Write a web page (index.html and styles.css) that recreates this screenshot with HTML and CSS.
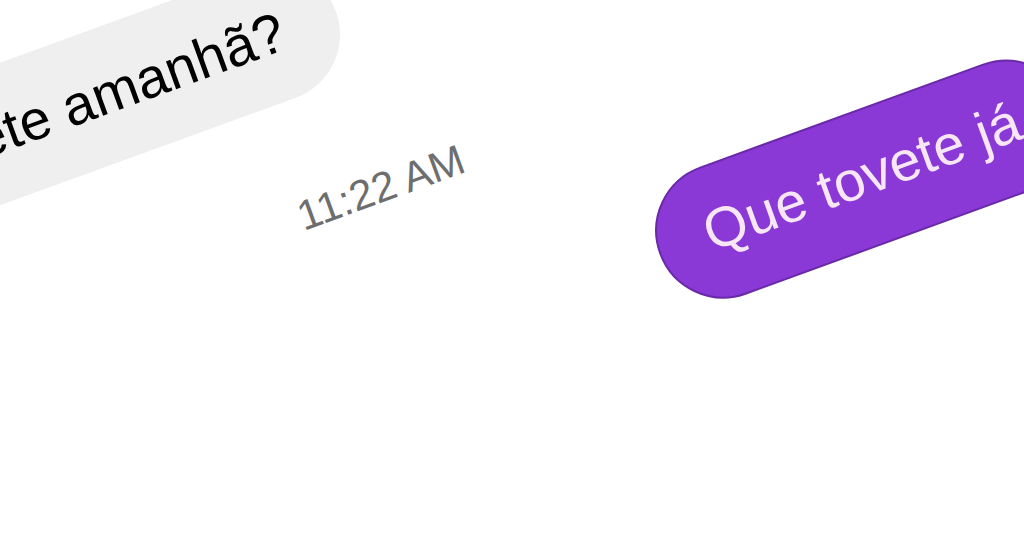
FILE: index.html
```html
<!DOCTYPE html>
<html lang="pt">
<head>
<meta charset="utf-8">
<title>Chat</title>
<link rel="stylesheet" href="styles.css">
</head>
<body>
<div class="viewport">
  <div class="stage">
    <div class="row-in">
      <div class="bubble bubble-in">ete amanhã?</div>
    </div>
    <div class="timestamp">11:22 AM</div>
    <div class="row-out">
      <div class="bubble bubble-out">Que tovete já</div>
    </div>
  </div>
</div>
</body>
</html>
```
FILE: styles.css
```css
html, body {
  margin: 0;
  padding: 0;
  background: #ffffff;
}
.viewport {
  width: 1024px;
  height: 538px;
  overflow: hidden;
  background: #ffffff;
}
.stage {
  width: 1400px;
  margin-left: -319px;
  margin-top: -60px;
  display: flex;
  flex-direction: column;
  transform-origin: 700px 248px;
  transform: rotate(-20deg);
  font-family: "Liberation Sans", Arial, sans-serif;
}
.row-in {
  width: 718px;
  display: flex;
  justify-content: flex-end;
}
.bubble {
  height: 134px;
  border-radius: 67px;
  display: flex;
  align-items: center;
  font-size: 56px;
  white-space: nowrap;
  box-sizing: border-box;
}
.bubble-in {
  background: #efefef;
  color: #000000;
  padding: 0 56px 4px 60px;
}
.timestamp {
  margin-top: 89px;
  height: 50px;
  line-height: 50px;
  text-align: center;
  font-size: 42px;
  color: #6e6e6e;
}
.row-out {
  margin-top: 64px;
  padding-left: 939px;
  display: flex;
}
.bubble-out {
  background: #8a38d6;
  color: #f6e6f6;
  padding: 0 52px 8px 48px;
  border: 2px solid #6a2aa8;
  height: 136px;
  border-radius: 68px;
}
```
